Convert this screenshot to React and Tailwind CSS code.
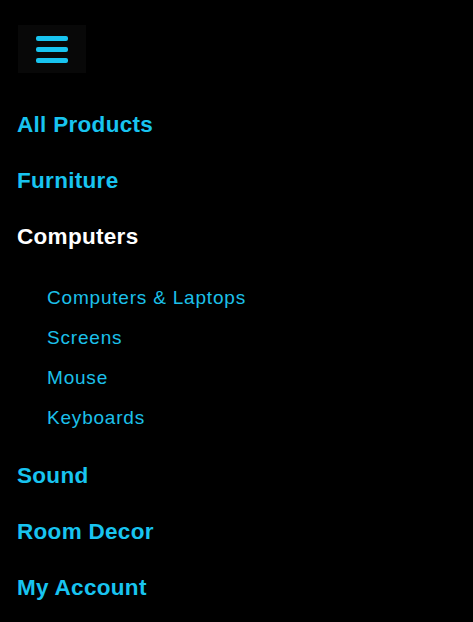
export default function App() {
  const font = { fontFamily: '"Liberation Sans", Arial, sans-serif' };
  const Head = ({ children, white }) => (
    <div className={`h-[56px] flex items-center pl-[17px] text-[22.5px] font-bold tracking-[0.3px] ${white ? 'text-white' : 'text-[#18c4f0]'}`}>
      {children}
    </div>
  );
  const Sub = ({ children }) => (
    <div className="h-[40px] flex items-center pl-[47px] text-[19px] tracking-[0.8px] text-[#1cc0ea]">
      {children}
    </div>
  );
  return (
    <div className="w-[473px] h-[622px] bg-black overflow-hidden" style={font}>
      <div className="pt-[25px] pl-[18px]">
        <button className="w-[68px] h-[48px] bg-[#080808] flex flex-col items-center justify-center gap-[6px]">
          <span className="block w-[32px] h-[5px] rounded-[2px] bg-[#18c4f0]" />
          <span className="block w-[32px] h-[5px] rounded-[2px] bg-[#18c4f0]" />
          <span className="block w-[32px] h-[5px] rounded-[2px] bg-[#18c4f0]" />
        </button>
      </div>
      <nav className="mt-[24px] flex flex-col">
        <Head>All Products</Head>
        <Head>Furniture</Head>
        <Head white>Computers</Head>
        <div className="pt-[13px] pb-[10px] flex flex-col">
          <Sub>Computers &amp; Laptops</Sub>
          <Sub>Screens</Sub>
          <Sub>Mouse</Sub>
          <Sub>Keyboards</Sub>
        </div>
        <Head>Sound</Head>
        <Head>Room Decor</Head>
        <Head>My Account</Head>
      </nav>
    </div>
  );
}
